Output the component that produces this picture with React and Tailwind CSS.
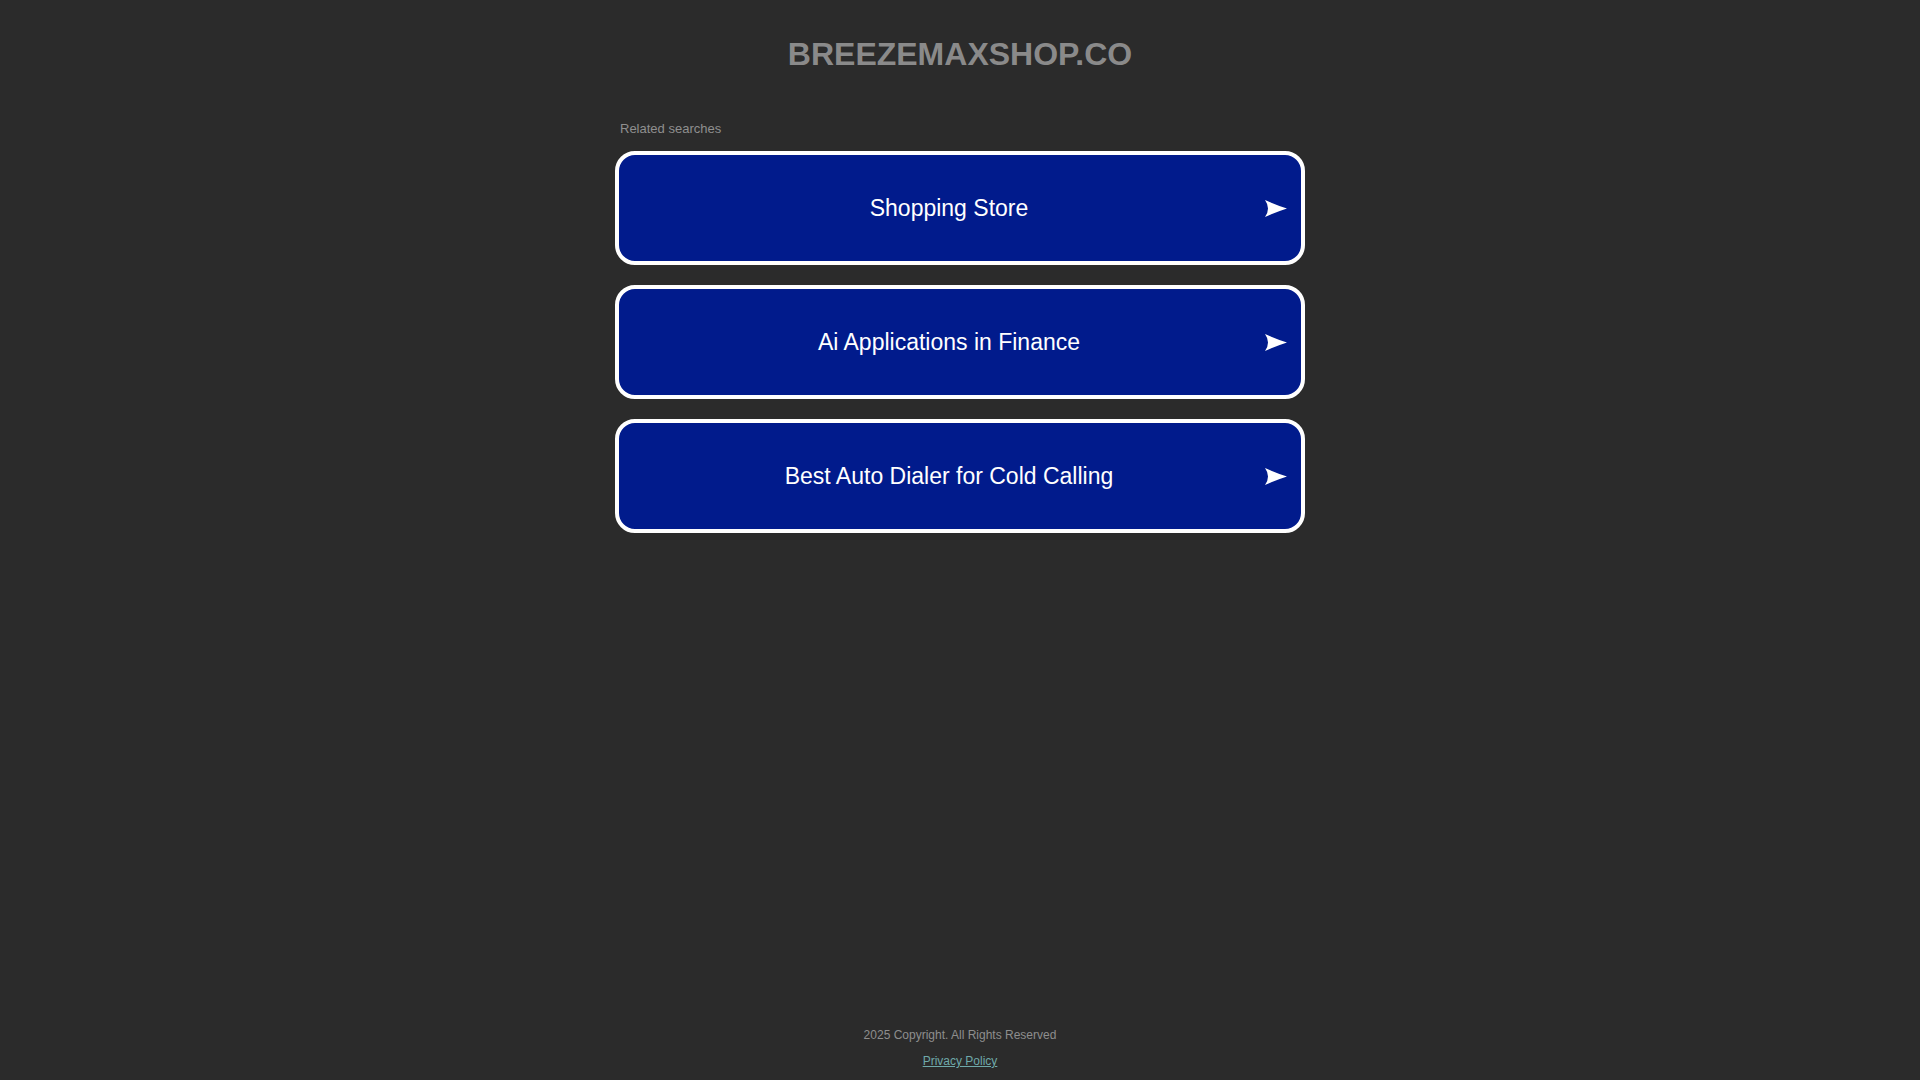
import React from "react";

const searches = ["Shopping Store", "Ai Applications in Finance", "Best Auto Dialer for Cold Calling"];

function Arrow() {
  return (
    <svg width="22" height="17" viewBox="0 0 22 17" className="shrink-0">
      <path d="M0 0 Q11 5 22 8.5 Q11 12 0 17 Q6 8.5 0 0 Z" fill="#ffffff" />
    </svg>
  );
}

export default function App() {
  return (
    <div className="min-h-screen bg-[#2b2b2b] flex flex-col font-['Liberation_Sans',Arial,sans-serif]">
      <main className="flex flex-col items-center">
        <h1 className="mt-[36px] text-[32px] leading-[36px] font-bold text-[#8a8a8a] uppercase">
          breezemaxshop.co
        </h1>

        <div className="w-[690px] mt-[49px]">
          <p className="pl-[5px] text-[13px] leading-[16px] text-[#8f8f8f]">Related searches</p>

          <div className="mt-[14px] flex flex-col gap-[20px]">
            {searches.map((s) => (
              <a
                key={s}
                href="#"
                className="h-[114px] flex items-center px-[14px] bg-[#011b8c] border-4 border-white rounded-[20px] text-white"
              >
                <span className="flex-1 text-center text-[23px] leading-[28px]">{s}</span>
                <Arrow />
              </a>
            ))}
          </div>
        </div>
      </main>

      {/* footer */}
      <footer className="mt-auto pb-[11px] flex flex-col items-center text-[12px] leading-[16px]">
        <p className="text-[#8e8e8e]">2025 Copyright. All Rights Reserved</p>
        <a href="#" className="mt-[10px] text-[#6fa9aa] underline">
          Privacy Policy
        </a>
      </footer>
    </div>
  );
}
